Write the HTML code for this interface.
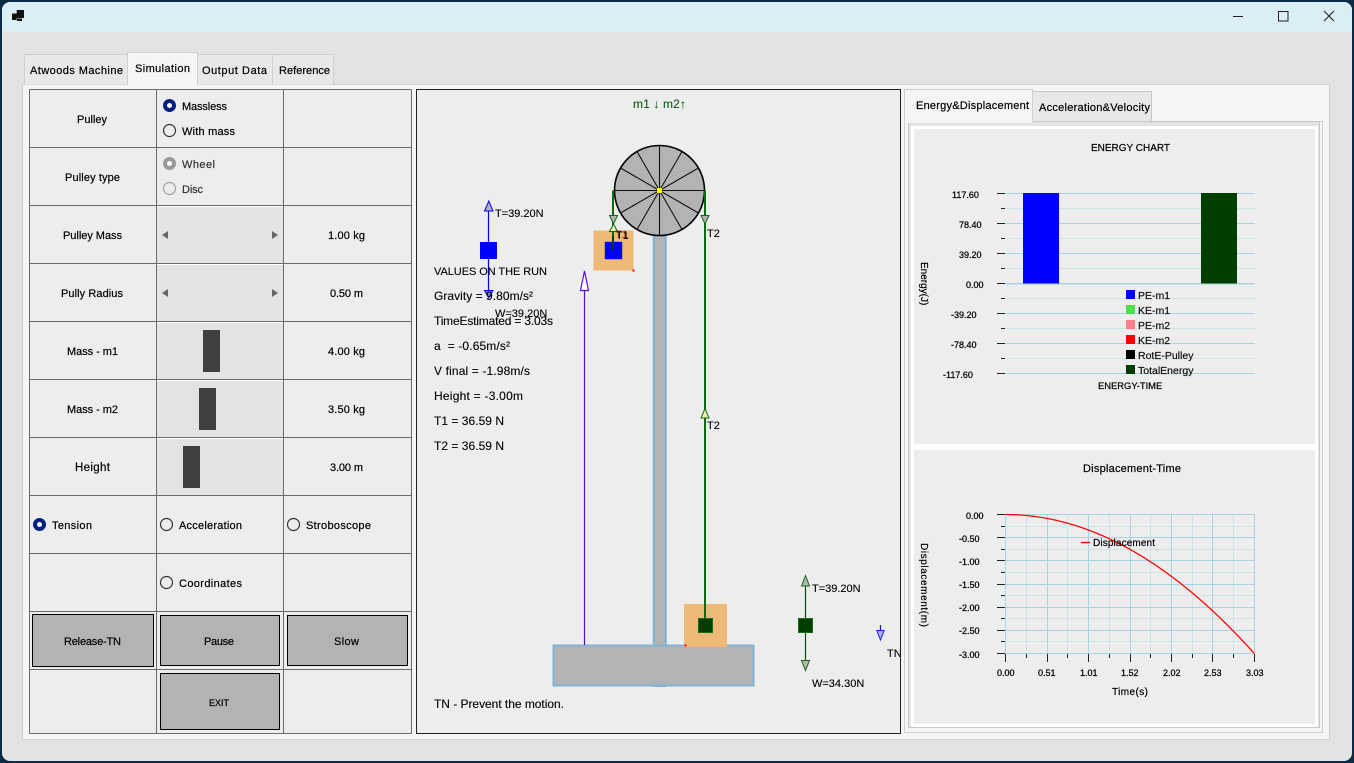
<!DOCTYPE html>
<html><head><meta charset="utf-8"><title>Atwoods Machine</title>
<style>
html,body{margin:0;padding:0;width:1354px;height:763px;overflow:hidden;background:#0b2a45}
svg{display:block;position:absolute;left:0;top:0}
text{font-family:"Liberation Sans",sans-serif;font-size:11px;color:#000;fill:currentColor;stroke:currentColor;stroke-width:.2px}
.s{font-size:12px;stroke-width:.12px}
.f{font-size:11px;stroke-width:.12px}
.c{font-size:10px}
.n{font-size:9px;stroke-width:.25px}
.l{font-size:10.5px;color:#111}
</style></head><body>
<svg width="1354" height="763" viewBox="0 0 1354 763" xmlns="http://www.w3.org/2000/svg">
<defs><clipPath id="sim"><rect x="417" y="90" width="483" height="643"/></clipPath></defs>
<!-- window -->
<rect x="0" y="0" width="1354" height="763" fill="#0b2a45"/>
<rect x="2" y="2" width="1350" height="759" rx="8" fill="#e3e3e3"/>
<path d="M2 32V10a8 8 0 0 1 8-8H1344a8 8 0 0 1 8 8V32Z" fill="#dbedf5"/>
<!-- title icon -->
<path d="M12 13.5h4.7V20H12ZM16.7 10H24V18H16.7ZM17 18.5H22V21H17Z" fill="#111"/>
<!-- window controls -->
<path d="M1233 16.5H1243" stroke="#222" stroke-width="1"/>
<rect x="1278.5" y="11.5" width="9.5" height="9.5" fill="none" stroke="#222" stroke-width="1"/>
<path d="M1324 11L1334 21M1334 11L1324 21" stroke="#222" stroke-width="1.1"/>
<!-- tabs -->
<rect x="22.5" y="84.5" width="1307" height="655" fill="#f5f5f5" stroke="#d0d0d0"/>
<g stroke="#d0d0d0" fill="#e8e8e8" shape-rendering="crispEdges">
<path d="M24.5 84.5V54.5H127.5V84.5"/>
<path d="M197.5 84.5V54.5H272.5V84.5"/>
<path d="M272.5 84.5V54.5H333.5V84.5"/>
<path d="M127.5 85.5V52.5H197.5V85.5" fill="#f5f5f5"/>
</g>
<rect x="128" y="83" width="69" height="3" fill="#f5f5f5"/>
<text x="30" y="74" textLength="93">Atwoods Machine</text>
<text x="135" y="72" textLength="55">Simulation</text>
<text x="202" y="74" textLength="65">Output Data</text>
<text x="279" y="74" textLength="51">Reference</text>
<!-- control table -->
<rect x="29.5" y="89.5" width="382" height="644" fill="#ededed"/>
<g fill="#e3e3e3" shape-rendering="crispEdges">
<rect x="157" y="206" width="126" height="57"/><rect x="157" y="264" width="126" height="57"/><rect x="157" y="322" width="126" height="57"/><rect x="157" y="380" width="126" height="57"/><rect x="157" y="438" width="126" height="57"/>
</g>
<path d="M157 206.5H283M157 264.5H283M157 322.5H283M157 380.5H283M157 438.5H283" stroke="#fff" shape-rendering="crispEdges"/>
<path d="M29.5 89.5V733.5M156.5 89.5V733.5M283.5 89.5V733.5M411.5 89.5V733.5M29.5 89.5H411.5M29.5 147.5H411.5M29.5 205.5H411.5M29.5 263.5H411.5M29.5 321.5H411.5M29.5 379.5H411.5M29.5 437.5H411.5M29.5 495.5H411.5M29.5 553.5H411.5M29.5 611.5H411.5M29.5 669.5H411.5M29.5 733.5H411.5" stroke="#6b6b6b" fill="none" shape-rendering="crispEdges"/>
<!-- scrollbars -->
<path d="M168 231V239L162 235ZM272 231V239L278 235ZM168 289V297L162 293ZM272 289V297L278 293Z" fill="#666"/>
<g fill="#404040"><rect x="203" y="330" width="17" height="42"/><rect x="199" y="388" width="17" height="42"/><rect x="183" y="446" width="17" height="42"/></g>
<!-- labels -->
<text x="77" y="123" textLength="30">Pulley</text>
<text x="65" y="181" textLength="55">Pulley type</text>
<text x="63" y="239" textLength="59">Pulley Mass</text>
<text x="61" y="297" textLength="62">Pully Radius</text>
<text x="67" y="355" textLength="51">Mass - m1</text>
<text x="67" y="413" textLength="51">Mass - m2</text>
<text x="75" y="471" textLength="35" style="font-size:11.5px">Height</text>
<text x="182" y="110" textLength="45">Massless</text>
<text x="182" y="135" textLength="53">With mass</text>
<text x="182" y="168" textLength="33" style="color:#333">Wheel</text>
<text x="182" y="193" textLength="21" style="color:#333">Disc</text>
<text x="328" y="239" textLength="37">1.00 kg</text>
<text x="330" y="297" textLength="33">0.50 m</text>
<text x="328" y="355" textLength="37">4.00 kg</text>
<text x="328" y="413" textLength="37">3.50 kg</text>
<text x="330" y="471" textLength="33">3.00 m</text>
<text x="52" y="529" textLength="40">Tension</text>
<text x="179" y="529" textLength="63">Acceleration</text>
<text x="306" y="529" textLength="65">Stroboscope</text>
<text x="179" y="587" textLength="63">Coordinates</text>
<!-- radios -->
<g fill="none" stroke="#333" stroke-width="1.2">
<circle cx="169.5" cy="130.5" r="6"/>
<circle cx="166.5" cy="524.5" r="6"/>
<circle cx="293.5" cy="524.5" r="6"/>
<circle cx="166.5" cy="582.5" r="6"/>
<circle cx="169.5" cy="188.5" r="6" stroke="#a0a0a0"/>
</g>
<circle cx="169.5" cy="105.5" r="6.5" fill="#00207f"/><circle cx="169.5" cy="105.5" r="2.5" fill="#fff"/>
<circle cx="39.5" cy="524.5" r="6.5" fill="#00207f"/><circle cx="39.5" cy="524.5" r="2.5" fill="#fff"/>
<circle cx="169.5" cy="163.5" r="6.5" fill="#999"/><circle cx="169.5" cy="163.5" r="2.5" fill="#fff"/>
<!-- buttons -->
<g fill="#b3b3b3" stroke="#000" shape-rendering="crispEdges">
<rect x="32.5" y="614.5" width="121" height="52"/>
<rect x="160.5" y="615.5" width="119" height="50"/>
<rect x="287.5" y="615.5" width="120" height="50"/>
<rect x="160.5" y="673.5" width="119" height="56"/>
</g>
<text x="64" y="645" textLength="57">Release-TN</text>
<text x="204" y="645" textLength="30">Pause</text>
<text x="334" y="645" textLength="25">Slow</text>
<text x="209" y="706" style="font-size:9px">EXIT</text>
<!-- simulation panel -->
<rect x="416.5" y="89.5" width="484" height="644" fill="#ededed" stroke="#222" shape-rendering="crispEdges"/>
<g clip-path="url(#sim)">
<text x="633" y="108" class="s" textLength="53" style="color:#0a5a0a">m1 ↓ m2↑</text>
<!-- base and column -->
<rect x="653.7" y="236" width="12" height="450" fill="#b3b3b3" stroke="#7ab3d0" stroke-width="2"/>
<rect x="553.5" y="645.5" width="200" height="40" fill="#b3b3b3" stroke="#7fb4d2" stroke-width="2"/>
<!-- orange boxes -->
<rect x="593.5" y="230.5" width="40" height="40" fill="#eeba78"/>
<rect x="684" y="604" width="43" height="43" fill="#eeba78"/>
<rect x="632.5" y="269.5" width="2" height="2" fill="#f00"/>
<rect x="684.5" y="644.5" width="2" height="2" fill="#f00"/>
<!-- pulley -->
<circle cx="659.5" cy="190.5" r="45" fill="#b3b3b3" stroke="#000" stroke-width="1.6"/>
<path d="M659.5 145.5V235.5M614.5 190.5H704.5M637 151.5L682 229.5M682 151.5L637 229.5M620.5 168L698.5 213M698.5 168L620.5 213" stroke="#111" stroke-width="1.1"/>
<rect x="657" y="188" width="5" height="5" fill="#ff0"/>
<!-- ropes -->
<path d="M613 190.5V245M705 190.5V625" stroke="#0e6a0e" stroke-width="2" fill="none"/>
<rect x="605" y="242" width="17" height="17" fill="#0000ff" stroke="#1a1ad0" stroke-width=".5"/>
<path d="M613 236V250" stroke="#0a3a0a" stroke-width="2"/>
<rect x="698.5" y="618.5" width="14" height="14" fill="#003e00" stroke="#1a6a1a"/>
<path d="M609.5 215.5H617.5L613.5 224Z" fill="#b3b3b3" stroke="#0e6a0e"/>
<path d="M609.5 231.5H617.5L613.5 224Z" fill="#eef0b8" stroke="#0e6a0e"/>
<path d="M701 215.5H709L705 224Z" fill="#b3b3b3" stroke="#0e6a0e"/>
<path d="M701 418H709L705 408.5Z" fill="#eef0b8" stroke="#0e6a0e"/>
<text x="615" y="238" class="f" style="color:#8a3010;stroke-width:0">T1</text><text x="616" y="239" class="f" style="stroke-width:0">T1</text>
<text x="707" y="237" class="f">T2</text>
<text x="707" y="429" class="f">T2</text>
<!-- blue force diagram -->
<path d="M488.5 205V294" stroke="#0000ff" stroke-width="1.2"/>
<path d="M484.5 211H493L488.8 201Z" fill="#b3b3b3" stroke="#0000ff"/>
<path d="M484.5 290.5H493L488.8 298Z" fill="#8080d0" stroke="#0000ff"/>
<rect x="480" y="242" width="17" height="17" fill="#0000ff"/>
<text x="495" y="217" class="f">T=39.20N</text>
<text x="495" y="317" class="f">W=39.20N</text>
<!-- purple arrow -->
<path d="M584.5 290V645" stroke="#5a10d0" stroke-width="1.2"/>
<path d="M580.5 290.5H588.5L584.5 271Z" fill="#fff" stroke="#5a10d0" stroke-width="1.2"/>
<!-- green force -->
<path d="M805.5 585V661" stroke="#0a4a0a" stroke-width="1.2"/>
<path d="M801.5 586H809.5L805.5 575.5Z" fill="#b3b3b3" stroke="#1a6a1a"/>
<path d="M801.5 660.5H809.5L805.5 670.5Z" fill="#b3b3b3" stroke="#1a6a1a"/>
<rect x="798.5" y="618.5" width="14" height="14" fill="#003e00" stroke="#1a6a1a"/>
<text x="812" y="592" class="f">T=39.20N</text>
<text x="812" y="687" class="f">W=34.30N</text>
<!-- small TN -->
<path d="M880.5 625V631" stroke="#1a1af0" stroke-width="1.2"/>
<path d="M876.8 630.5H884.2L880.5 640Z" fill="#b0b0e8" stroke="#1a1af0"/>
<text x="887" y="657" class="f">TN</text>
<!-- values -->
<text x="434" y="275" class="f" textLength="113">VALUES ON THE RUN</text>
<text x="434" y="300" class="s" textLength="99">Gravity = 9.80m/s²</text>
<text x="434" y="325" class="s" textLength="119">TimeEstimated = 3.03s</text>
<text x="434" y="350" class="s" textLength="76" xml:space="preserve">a  = -0.65m/s²</text>
<text x="434" y="375" class="s" textLength="96">V final = -1.98m/s</text>
<text x="434" y="400" class="s" textLength="89">Height = -3.00m</text>
<text x="434" y="425" class="s" textLength="70">T1 = 36.59 N</text>
<text x="434" y="450" class="s" textLength="70">T2 = 36.59 N</text>
<text x="434" y="708" class="s" textLength="130">TN - Prevent the motion.</text>
</g>
<!-- right tab control -->
<path d="M1032.5 121.5V91.5H1151.5V121.5Z" fill="#e8e8e8" stroke="#c8c8c8" shape-rendering="crispEdges"/>
<rect x="904.5" y="121.5" width="418" height="611" fill="#f5f5f5" stroke="#d0d0d0" shape-rendering="crispEdges"/>
<rect x="908.5" y="121.5" width="411" height="606" fill="#e3e3e3" stroke="#c8c8c8" shape-rendering="crispEdges"/>
<path d="M904.5 122V89.5H1032.5V122" fill="#f5f5f5" stroke="#d0d0d0" shape-rendering="crispEdges"/>
<rect x="905" y="119" width="127" height="4" fill="#f5f5f5"/>
<text x="916" y="109" textLength="113">Energy&amp;Displacement</text>
<text x="1039" y="111" textLength="111">Acceleration&amp;Velocity</text>
<rect x="911" y="126" width="407" height="601" fill="#fff"/>
<rect x="914" y="129" width="401" height="315" fill="#ededed"/>
<rect x="914" y="450" width="401" height="274" fill="#ededed"/>
<!-- energy chart -->
<text x="1091" y="151" class="c" textLength="79">ENERGY CHART</text>
<g shape-rendering="crispEdges">
<path d="M1005 193.5H1255M1005 223.5H1255M1005 253.5H1255M1005 283.5H1255M1005 313.5H1255M1005 343.5H1255M1005 373.5H1255" stroke="#a8d5e5"/>
<path d="M1005 208.5H1255M1005 238.5H1255M1005 268.5H1255M1005 298.5H1255M1005 328.5H1255M1005 358.5H1255" stroke="#cfe4ea"/>
<path d="M997 193.5H1005M997 223.5H1005M997 253.5H1005M997 283.5H1005M997 313.5H1005M997 343.5H1005M997 373.5H1005M1001 208.5H1005M1001 238.5H1005M1001 268.5H1005M1001 298.5H1005M1001 328.5H1005M1001 358.5H1005" stroke="#222"/>
<rect x="1023" y="193" width="36" height="91" fill="#0000ff"/>
<rect x="1201" y="193" width="36" height="91" fill="#003e00"/>
<path d="M1005 284H1255" stroke="#a8d5e5" stroke-width="1"/>
</g>
<text x="952" y="198" class="n">117.60</text>
<text x="959" y="228" class="n">78.40</text>
<text x="959" y="258" class="n">39.20</text>
<text x="966" y="288" class="n">0.00</text>
<text x="951" y="318" class="n">-39.20</text>
<text x="951" y="348" class="n">-78.40</text>
<text x="943" y="378" class="n">-117.60</text>
<text transform="translate(921,262) rotate(90)" class="c">Energy(J)</text>
<rect x="1126" y="290" width="9" height="9" fill="#0000ff"/>
<rect x="1126" y="305" width="9" height="9" fill="#4de04d"/>
<rect x="1126" y="320" width="9" height="9" fill="#ff8088"/>
<rect x="1126" y="335" width="9" height="9" fill="#ff0000"/>
<rect x="1126" y="350" width="9" height="9" fill="#000"/>
<rect x="1126" y="365" width="9" height="9" fill="#003e00"/>
<text x="1138" y="299" class="l">PE-m1</text>
<text x="1138" y="314" class="l">KE-m1</text>
<text x="1138" y="329" class="l">PE-m2</text>
<text x="1138" y="344" class="l">KE-m2</text>
<text x="1138" y="359" class="l">RotE-Pulley</text>
<text x="1138" y="374" class="l">TotalEnergy</text>
<text x="1098" y="389" style="font-size:9.4px">ENERGY-TIME</text>
<!-- displacement chart -->
<text x="1083" y="472" textLength="98">Displacement-Time</text>
<g shape-rendering="crispEdges">
<path d="M1005 526.5H1255M1005 549.5H1255M1005 572.5H1255M1005 595.5H1255M1005 618.5H1255M1005 641.5H1255M1026.5 514V654M1067.5 514V654M1109.5 514V654M1150.5 514V654M1192.5 514V654M1233.5 514V654" stroke="#cfe4ea"/>
<path d="M1005 514.5H1255M1005 537.5H1255M1005 560.5H1255M1005 584.5H1255M1005 607.5H1255M1005 630.5H1255M1005 653.5H1255M1005.5 514V654M1047.5 514V654M1088.5 514V654M1130.5 514V654M1171.5 514V654M1212.5 514V654M1254.5 514V654" stroke="#a8d5e5"/>
<path d="M997 514.5H1005M997 537.5H1005M997 560.5H1005M997 584.5H1005M997 607.5H1005M997 630.5H1005M997 653.5H1005M1001 526.5H1005M1001 549.5H1005M1001 572.5H1005M1001 595.5H1005M1001 618.5H1005M1001 641.5H1005M1005.5 654V662M1047.5 654V662M1088.5 654V662M1130.5 654V662M1171.5 654V662M1212.5 654V662M1254.5 654V662M1026.5 654V658M1067.5 654V658M1109.5 654V658M1150.5 654V658M1192.5 654V658M1233.5 654V658" stroke="#222"/>
</g>
<path d="M1005.3 514.5Q1129.8 514.5 1254.3 653.5" fill="none" stroke="#f00" stroke-width="1.3"/>
<path d="M1081 542.5H1090" stroke="#f00" stroke-width="1.4"/>
<text x="1093" y="546" class="c" textLength="62">Displacement</text>
<text x="966" y="519" class="n">0.00</text>
<text x="959" y="542" class="n">-0.50</text>
<text x="959" y="565" class="n">-1.00</text>
<text x="959" y="588" class="n">-1.50</text>
<text x="959" y="611" class="n">-2.00</text>
<text x="959" y="634" class="n">-2.50</text>
<text x="959" y="658" class="n">-3.00</text>
<text x="997" y="676" class="n">0.00</text>
<text x="1038" y="676" class="n">0.51</text>
<text x="1080" y="676" class="n">1.01</text>
<text x="1121" y="676" class="n">1.52</text>
<text x="1163" y="676" class="n">2.02</text>
<text x="1204" y="676" class="n">2.53</text>
<text x="1246" y="676" class="n">3.03</text>
<text x="1112" y="695" class="c" textLength="36">Time(s)</text>
<text transform="translate(921,543) rotate(90)" class="c" textLength="84">Displacement(m)</text>
</svg>
</body></html>
